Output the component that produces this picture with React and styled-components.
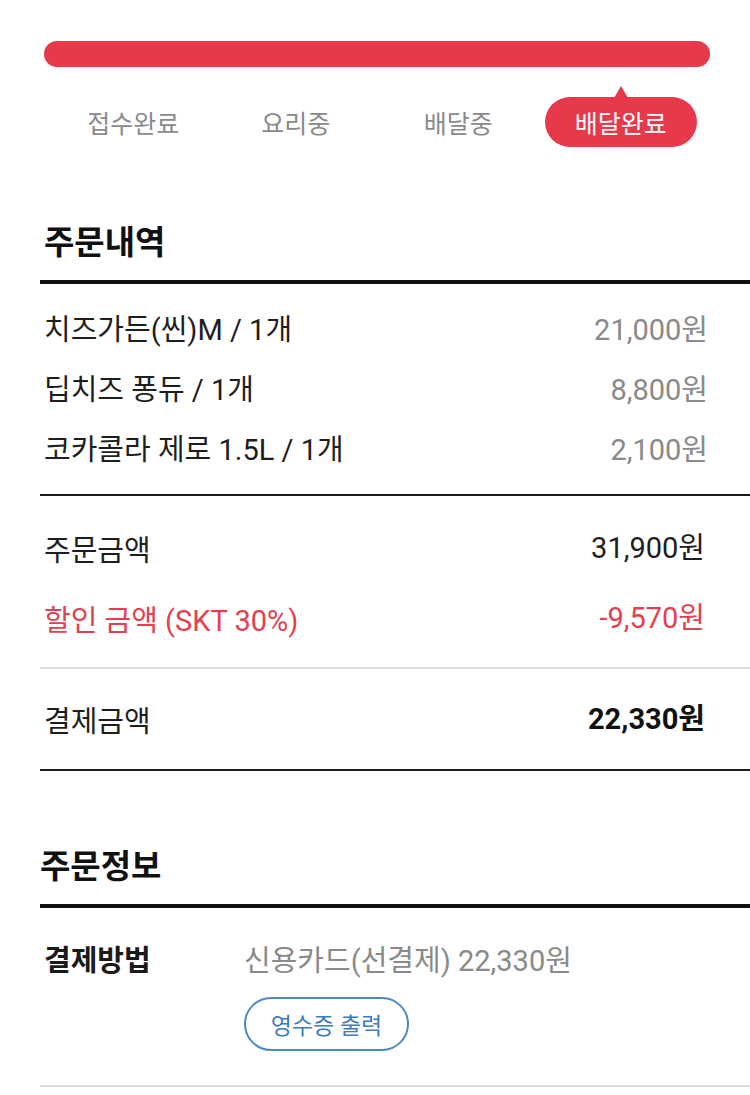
import React from 'react';
import styled, { createGlobalStyle } from 'styled-components';

const GlobalStyle = createGlobalStyle`
  body {
    margin: 0;
    background: #ffffff;
    font-family: Roboto, 'Noto Sans CJK KR', sans-serif;
    color: #1a1a1a;
  }
`;

const RED = '#e8394a';

const steps = ['접수완료', '요리중', '배달중', '배달완료'];

const items = [
  { name: '치즈가든(씬)M / 1개', price: '21,000원' },
  { name: '딥치즈 퐁듀 / 1개', price: '8,800원' },
  { name: '코카콜라 제로 1.5L / 1개', price: '2,100원' },
];

const App = () => {
  const current = 3;
  return (
    <Page>
      <GlobalStyle />
      <ProgressBar />
      <Steps>
        {steps.map((s, i) => (
          <Step key={s}>
            {i === current ? <ActiveStep>{s}</ActiveStep> : <StepLabel>{s}</StepLabel>}
          </Step>
        ))}
      </Steps>

      <SectionTitle $inset={4}>주문내역</SectionTitle>
      <Divider $size={4} $color="#111" />
      <ItemList>
        {items.map((it) => (
          <ItemRow key={it.name}>
            <span>{it.name}</span>
            <ItemPrice>{it.price}</ItemPrice>
          </ItemRow>
        ))}
      </ItemList>
      <Divider $size={2} $color="#1a1a1a" />
      <Summary>
        <SummaryRow>
          <SummaryLabel>주문금액</SummaryLabel>
          <SummaryValue>31,900원</SummaryValue>
        </SummaryRow>
        <SummaryRow $red>
          <SummaryLabel>할인 금액 (SKT 30%)</SummaryLabel>
          <SummaryValue>-9,570원</SummaryValue>
        </SummaryRow>
      </Summary>
      <Divider $size={2} $color="#dddddd" />
      <TotalBlock>
        <SummaryRow>
          <SummaryLabel>결제금액</SummaryLabel>
          <SummaryValue $bold>22,330원</SummaryValue>
        </SummaryRow>
      </TotalBlock>
      <Divider $size={2} $color="#1a1a1a" />

      <SectionTitle $inset={0}>주문정보</SectionTitle>
      <Divider $size={4} $color="#111" />
      <InfoRow>
        <InfoLabel>결제방법</InfoLabel>
        <InfoBody>
          <InfoValue>신용카드(선결제) 22,330원</InfoValue>
          <ReceiptButton type="button">영수증 출력</ReceiptButton>
        </InfoBody>
      </InfoRow>
      <Divider $size={2} $color="#dddddd" />
    </Page>
  );
};

const Page = styled.div`
  padding-left: 40px;
  width: 710px;
`;

const ProgressBar = styled.div`
  margin: 41px 40px 0 4px;
  height: 26px;
  border-radius: 13px;
  background: ${RED};
`;

const Steps = styled.div`
  display: grid;
  grid-template-columns: repeat(4, 1fr);
  width: 650px;
  margin: 30px 0 0 12px;
  height: 50px;
`;

const Step = styled.div`
  display: flex;
  align-items: center;
  justify-content: center;
`;

const StepLabel = styled.span`
  font-size: 25px;
  color: #8a8a8a;
`;

const ActiveStep = styled.span`
  position: relative;
  display: flex;
  align-items: center;
  justify-content: center;
  width: 152px;
  height: 50px;
  border-radius: 25px;
  background: ${RED};
  color: #ffffff;
  font-size: 25px;

  &::before {
    content: '';
    position: absolute;
    top: -11px;
    left: 50%;
    transform: translateX(-50%);
    border-left: 7px solid transparent;
    border-right: 7px solid transparent;
    border-bottom: 12px solid ${RED};
  }
`;

const SectionTitle = styled.h2`
  margin: 76px 0 0;
  padding: 0 0 17px ${(p) => p.$inset}px;
  font-size: 33px;
  line-height: 40px;
  font-weight: 700;
  color: #111;
`;

const Divider = styled.div`
  height: ${(p) => p.$size}px;
  background: ${(p) => p.$color};
`;

const ItemList = styled.div`
  padding: 13px 42px 17px 4px;
`;

const ItemRow = styled.div`
  display: flex;
  justify-content: space-between;
  align-items: center;
  height: 60px;
  font-size: 29px;
  color: #1e1e1e;
`;

const ItemPrice = styled.span`
  color: #8a8a8a;
`;

const Summary = styled.div`
  display: flex;
  flex-direction: column;
  gap: 10px;
  padding: 19px 45px 22px 4px;
`;

const TotalBlock = styled.div`
  padding: 17px 45px 23px 4px;
`;

const SummaryRow = styled.div`
  display: flex;
  justify-content: space-between;
  align-items: center;
  height: 60px;
  font-size: 29px;
  color: ${(p) => (p.$red ? '#e4404f' : '#1e1e1e')};
`;

const SummaryLabel = styled.span`
  padding-top: 6px;
`;

const SummaryValue = styled.span`
  font-weight: ${(p) => (p.$bold ? 700 : 400)};
  color: ${(p) => (p.$bold ? '#111' : 'inherit')};
`;

const InfoRow = styled.div`
  display: flex;
  padding: 33px 0 34px 4px;
`;

const InfoLabel = styled.div`
  width: 200px;
  font-size: 29px;
  line-height: 40px;
  font-weight: 600;
  color: #1a1a1a;
`;

const InfoBody = styled.div`
  display: flex;
  flex-direction: column;
  align-items: flex-start;
  gap: 16px;
`;

const InfoValue = styled.div`
  font-size: 29px;
  line-height: 40px;
  color: #8a8a8a;
`;

const ReceiptButton = styled.button`
  width: 165px;
  height: 54px;
  border: 2px solid #4f87bf;
  border-radius: 27px;
  background: #ffffff;
  color: #3e7cbd;
  font-family: inherit;
  font-size: 23px;
  padding: 0;
`;

export default App;
